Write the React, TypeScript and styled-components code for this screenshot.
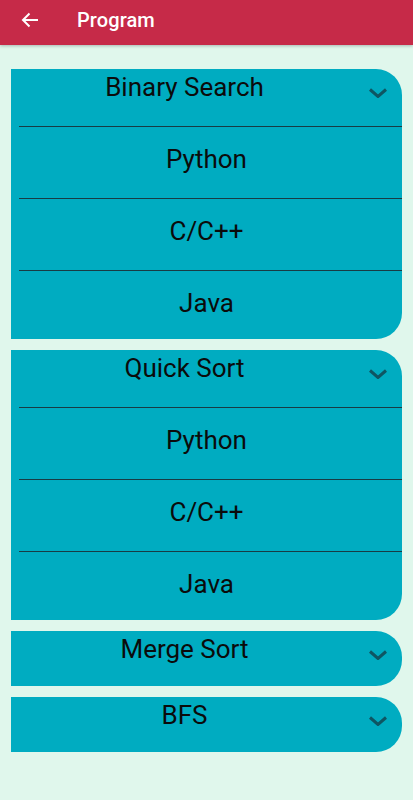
import React from "react";
import styled, {createGlobalStyle} from "styled-components";

const GlobalStyle = createGlobalStyle`
  html, body {
    margin: 0;
    padding: 0;
    background: #e0f7ec;
    font-family: Roboto, "Noto Sans", sans-serif;
  }
`;

type Section = {
  title: string;
  items: string[];
};

const sections: Section[] = [
  {title: "Binary Search", items: ["Python", "C/C++", "Java"]},
  {title: "Quick Sort", items: ["Python", "C/C++", "Java"]},
  {title: "Merge Sort", items: []},
  {title: "BFS", items: []},
];

const Page = styled.div`
  min-height: 800px;
  background: #e0f7ec;
`;

const AppBar = styled.header`
  height: 45px;
  box-sizing: border-box;
  padding-bottom: 6px;
  background: #c62a48;
  display: flex;
  align-items: center;
  box-shadow: 0 1px 3px rgba(0, 0, 0, 0.25);
`;

const BackButton = styled.div`
  width: 22px;
  height: 22px;
  margin-left: 19px;
  display: flex;
  align-items: center;
  justify-content: center;
`;

const Title = styled.h1`
  margin: 0 0 0 36px;
  color: #ffffff;
  font-size: 20px;
  font-weight: 500;
  letter-spacing: 0.1px;
`;

const List = styled.div`
  display: flex;
  flex-direction: column;
  gap: 11px;
  padding: 24px 11px 0 11px;
`;

const Card = styled.div`
  background: #00acc1;
  border-radius: 0 26px 26px 0;
  overflow: hidden;
`;

const CardHeader = styled.div<{ $open: boolean }>`
  display: flex;
  align-items: flex-start;
  height: ${p => (p.$open ? 57 : 55)}px;
`;

const CardTitle = styled.div`
  flex: 1;
  text-align: center;
  padding-top: 3px;
  font-size: 26px;
  line-height: 30px;
  color: #0b0b0b;
`;

const Chevron = styled.div`
  width: 40px;
  margin-right: 4px;
  margin-top: 19px;
  display: flex;
  justify-content: center;
`;

const Item = styled.div<{ $last: boolean }>`
  margin-left: 8px;
  border-top: 1.5px solid #183c44;
  height: ${p => (p.$last ? 68 : 71)}px;
  text-align: center;
`;

const ItemLabel = styled.div`
  margin-left: -8px;
  padding-top: 17px;
  font-size: 26px;
  line-height: 30px;
  color: #0b0b0b;
`;

const ArrowLeft = () => (
  <svg width="18" height="16" viewBox="0 0 18 16">
    <path d="M17 8H2M8.5 1.5L2 8l6.5 6.5" fill="none" stroke="#fff" strokeWidth="2"/>
  </svg>
);

const ExpandIcon = () => (
  <svg width="20" height="10" viewBox="0 0 20 10">
    <path d="M2 1.5l8 7 8-7" fill="none" stroke="#0e5663" strokeWidth="3"/>
  </svg>
);

export default function App() {
  return (
    <Page>
      <GlobalStyle/>
      <AppBar>
        <BackButton><ArrowLeft/></BackButton>
        <Title>Program</Title>
      </AppBar>
      <List>
        {sections.map(s => (
          <Card key={s.title}>
            <CardHeader $open={s.items.length > 0}>
              <CardTitle>{s.title}</CardTitle>
              <Chevron><ExpandIcon/></Chevron>
            </CardHeader>
            {s.items.map((it, i) => (
              <Item key={it} $last={i === s.items.length - 1}>
                <ItemLabel>{it}</ItemLabel>
              </Item>
            ))}
          </Card>
        ))}
      </List>
    </Page>
  );
}
